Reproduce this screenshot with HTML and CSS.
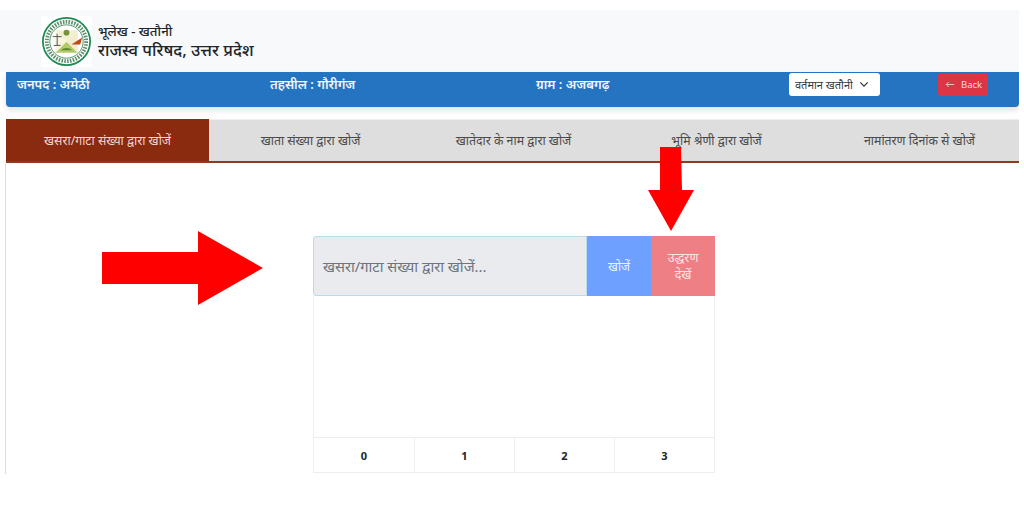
FILE: index.html
```html
<!DOCTYPE html>
<html lang="hi">
<head>
<meta charset="utf-8">
<title>भूलेख - खतौनी</title>
<link rel="stylesheet" href="styles.css">
</head>
<body>
<div class="page">
  <header class="site-head">
    <svg class="logo" viewBox="0 0 52 52" aria-hidden="true">
      <rect width="52" height="52" fill="#fff"/>
      <circle cx="26" cy="26" r="25" fill="#1f8a55"/>
      <circle cx="26" cy="26" r="23.200" fill="#fff"/>
      <circle cx="26" cy="26" r="20" fill="none" stroke="#5f8f6a" stroke-width="4" stroke-dasharray="1.600 1.300"/>
      <circle cx="26" cy="26" r="17" fill="#fff" stroke="#2b7a4b" stroke-width="0.8"/>
      <path d="M14.500 14.500 L37.500 14.500 L26 26 Z" fill="#eef0d0"/>
      <path d="M14.500 37.500 L37.500 37.500 L26 26 Z" fill="#b4c968"/>
      <path d="M14.500 14.500 L26 26 L14.500 37.500 Z" fill="#f7f3dc"/>
      <path d="M37.500 14.500 L26 26 L37.500 37.500 Z" fill="#f5ecd0"/>
      <path d="M31 29 L42 22 L40 29 Z" fill="#c2491d"/>
      <path d="M12 21 H21 M16.500 18 V30 M13 30 H20" stroke="#555" stroke-width="1" fill="none"/>
      <circle cx="26" cy="17" r="3" fill="#7a8f3a"/>
      <path d="M20 35 Q26 30 32 35 Z" fill="#5d8a32"/>
    </svg>
    <div class="brand">
      <div class="brand-sub">भूलेख - खतौनी</div>
      <div class="brand-main">राजस्व परिषद, उत्तर प्रदेश</div>
    </div>
  </header>

  <section class="info-bar">
    <div class="info-item info-district">जनपद : अमेठी</div>
    <div class="info-item info-tehsil">तहसील : गौरीगंज</div>
    <div class="info-item info-village">ग्राम : अजबगढ़</div>
    <div class="select-box">
      <span>वर्तमान खतौनी</span>
      <svg class="chev" viewBox="0 0 12 8" aria-hidden="true"><path d="M1.500 1.500 L6 6 L10.500 1.500" fill="none" stroke="#343a40" stroke-width="1.500"/></svg>
    </div>
    <a class="back-btn"><svg class="back-arrow" viewBox="0 0 12 8" aria-hidden="true"><path d="M11 4 H1.500 M4.500 1 L1.500 4 L4.500 7" fill="none" stroke="#f8d7da" stroke-width="1"/></svg>Back</a>
  </section>

  <nav class="tabs">
    <div class="tab tab-active">खसरा/गाटा संख्या द्वारा खोजें</div>
    <div class="tab">खाता संख्या द्वारा खोजें</div>
    <div class="tab">खातेदार के नाम द्वारा खोजें</div>
    <div class="tab">भूमि श्रेणी द्वारा खोजें</div>
    <div class="tab">नामांतरण दिनांक से खोजें</div>
  </nav>

  <main class="content">
    <div class="panel">
      <div class="search-row">
        <div class="search-input">खसरा/गाटा संख्या द्वारा खोजें...</div>
        <div class="btn-search">खोजें</div>
        <div class="btn-extract">उद्धरण देखें</div>
      </div>
      <div class="results"></div>
      <div class="pager">
        <div class="pager-cell">0</div>
        <div class="pager-cell">1</div>
        <div class="pager-cell">2</div>
        <div class="pager-cell">3</div>
      </div>
    </div>
  </main>

  <svg class="arrow arrow-right" viewBox="0 0 162 74" aria-hidden="true"><path d="M0 21 H96 V0 L161 37 L96 74 V53 H0 Z" fill="#ff0000"/></svg>
  <svg class="arrow arrow-down" viewBox="0 0 48 84" aria-hidden="true"><path d="M13 0 H34 L35 43 H47 L24 84 L1 43 H13 Z" fill="#ff0000"/></svg>
</div>
</body>
</html>
```
FILE: styles.css
```css
* { box-sizing: border-box; }
html, body { margin: 0; padding: 0; background: #fff; }
body { font-family: "Noto Sans", "Noto Sans Devanagari", "Lohit Devanagari", "Open Sans", sans-serif; overflow: hidden; }
.page { position: relative; width: 1019px; height: 512px; overflow: hidden; padding-top: 10px; }

.site-head { height: 62px; background: #f8f9fa; display: flex; align-items: center; padding: 0 0 0 41px; }
.logo { width: 51px; height: 51px; flex: none; }
.brand { margin-left: 6px; color: #212529; }
.brand-sub { font-size: 13.200px; line-height: 17px; font-weight: 500; }
.brand-main { font-size: 16.600px; line-height: 19px; font-weight: 500; }

.info-bar { position: relative; margin-left: 6px; height: 35px; background: #2574c2; border-radius: 0 0 4px 4px; box-shadow: 0 3px 6px rgba(0,0,0,.12); display: flex; align-items: flex-start; color: #fff; }
.info-item { font-size: 12.900px; font-weight: 600; line-height: 16px; margin-top: 4px; color: #f2f6fb; }
.info-district { width: 264px; padding-left: 11px; }
.info-tehsil { width: 266px; }
.info-village { width: 253px; }
.select-box { width: 91px; height: 23px; margin-top: 1px; background: #fff; border-radius: 3px; color: #343a40; font-size: 11px; display: flex; align-items: center; padding-left: 6px; gap: 6px; line-height: 1; }
.chev { width: 10px; height: 7px; }
.back-btn { margin-left: 58px; margin-top: 1px; width: 50px; height: 23px; background: #dc3545; border-radius: 3px; color: #f8d7da; font-size: 9.500px; display: flex; align-items: center; padding-left: 7px; gap: 6px; font-family: "Noto Sans", sans-serif; }
.back-arrow { width: 10px; height: 7px; }

.tabs { margin: 12px 0 0 6px; display: grid; grid-template-columns: repeat(5, 203px); height: 44px; background: #dedede; border-bottom: 2px solid #8e3b1f; border-top: 1px solid #eee; }
.tab { display: flex; align-items: center; justify-content: center; font-size: 12.300px; color: #4a4a4a; }
.tab-active { background: #8a2a0e; color: #f0d8cf; margin-top: -1px; }

.content { margin-left: 5px; height: 311px; border-left: 1px solid #dcdcdc; padding: 73px 0 0 307px; }
.panel { width: 402px; }
.search-row { display: flex; height: 60px; }
.search-input { width: 274px; background: #e9ebef; border: 1px solid #b9dcec; border-radius: 3px 0 0 3px; color: #6c757d; font-size: 14.700px; display: flex; align-items: center; padding-left: 9px; }
.btn-search { width: 64px; background: #6ea0ff; color: #eaf1ff; font-size: 12px; display: flex; align-items: center; justify-content: center; }
.btn-extract { width: 64px; background: #ee8085; color: #fbe4e5; font-size: 12.400px; line-height: 17px; display: flex; align-items: center; justify-content: center; text-align: center; padding: 0 12px; }
.results { height: 141px; border: solid #eee; border-width: 0 1px; }
.pager { display: grid; grid-template-columns: repeat(4, 1fr); height: 36px; border: 1px solid #eee; }
.pager-cell { display: flex; align-items: center; justify-content: center; font-size: 11px; font-weight: 700; color: #212529; border-left: 1px solid #eee; }
.pager-cell:first-child { border-left: 0; }

.arrow { position: absolute; }
.arrow-right { left: 102px; top: 231px; width: 162px; height: 74px; }
.arrow-down { left: 647px; top: 147px; width: 48px; height: 84px; }
```
